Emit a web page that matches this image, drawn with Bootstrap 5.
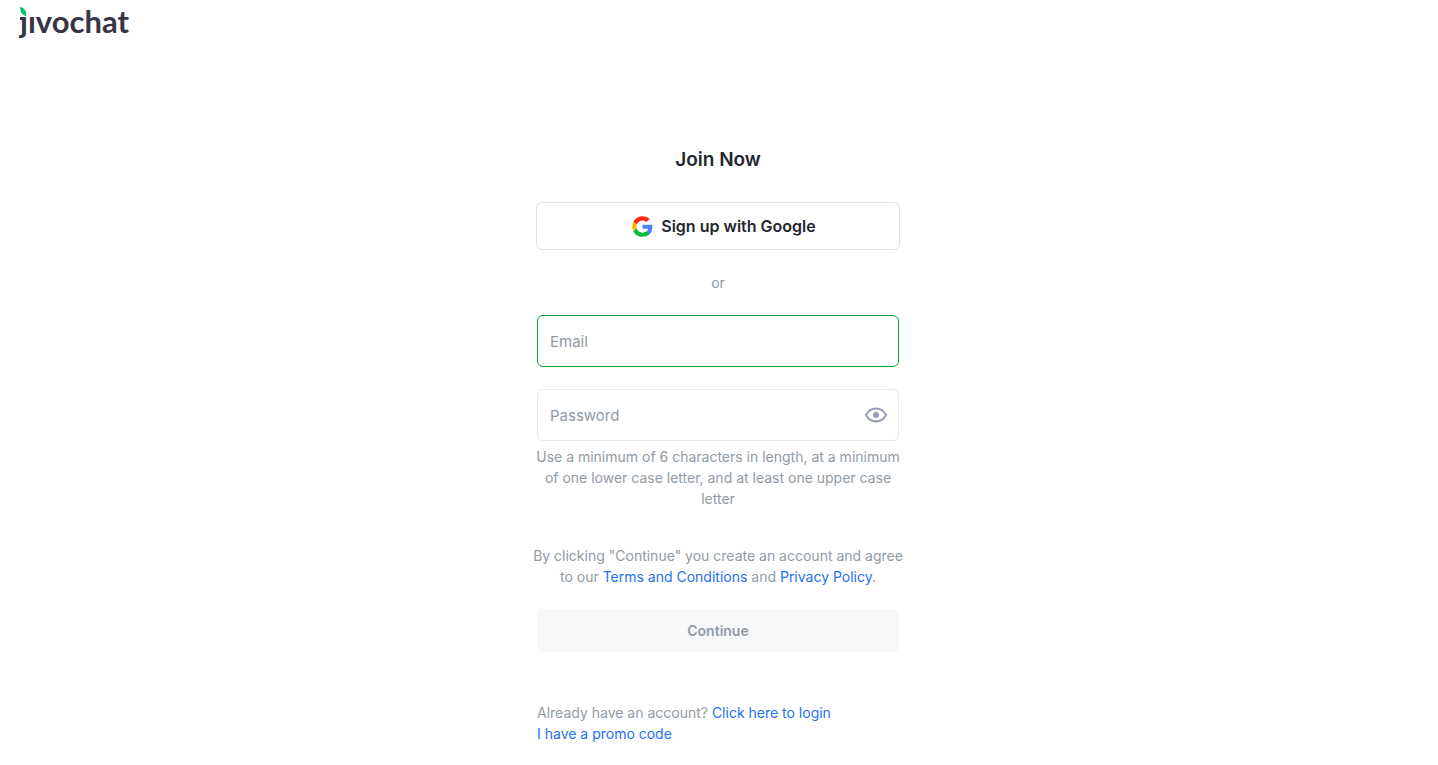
<!DOCTYPE html>
<html lang="en">
<head>
<meta charset="utf-8">
<meta name="viewport" content="width=device-width, initial-scale=1">
<title>JivoChat – Join Now</title>
<link href="https://cdn.jsdelivr.net/npm/bootstrap@5.3.0/dist/css/bootstrap.min.css" rel="stylesheet">
<style>
  body { font-family: Inter, "Liberation Sans", sans-serif; font-size: 14px; line-height: 21px; color: #919ba5; }
  a { color: #2371f5; text-decoration: none; }
  a:hover { text-decoration: underline; }
  .brand { height: 48px; }
  .signup { max-width: 364px; }
  .signup-wrap { padding: 97px 2px 20px 0; }
  .title { font-size: 19px; line-height: 30px; font-weight: 600; color: #23272f; margin-bottom: 27px; }
  .btn-google { height: 48px; font-size: 16px; font-weight: 600; color: #23272f; border: 1px solid #e1e1e8; border-radius: 6px; padding: 0 0 0 12px; }
  .btn-google:hover { background: #f7f8fa; border-color: #e1e1e8; }
  .divider { margin: 22px 0; }
  .signup-form, .signup-links { padding: 0 1px; }
  .field { height: 52px; font-size: 15px; padding: 0 12px; border: 1px solid #e9e9ee; border-radius: 6px; }
  .field::placeholder { color: #919ba5; }
  .field:focus, .field-active { border-color: #00a438; box-shadow: none; }
  .password-box { margin-top: 22px; }
  .field-password { padding-right: 46px; }
  .btn-eye { right: 12px; border: 0; line-height: 0; }
  .hint { margin: 5px -6px 36px; }
  .terms { margin: 0 -6px 22px; }
  .btn-continue, .btn-continue:disabled { height: 43px; font-size: 14px; font-weight: 600; color: #919ba5; background: #f7f8fa; border: 0; border-radius: 6px; opacity: 1; }
  .signup-links { margin-top: 50px; }
  .logo-text { font: 700 31px Lato, sans-serif; fill: #373447; }
</style>
</head>
<body class="bg-white">
<header class="brand">
  <a href="#" aria-label="JivoChat" class="d-inline-block">
    <svg class="d-block" width="140" height="48" viewBox="0 0 140 48">
      <text class="logo-text" x="20" y="33">ȷıvochat</text>
      <rect x="20" y="17" width="4" height="3" fill="#373447"/>
      <path d="M20 7C24 7.500 26.500 11 26.300 16C22.500 15.500 20 12 20 7Z" fill="#00c558"/>
    </svg>
  </a>
</header>
<main class="signup-wrap">
  <div class="signup mx-auto">
    <h1 class="title text-center">Join Now</h1>
    <button type="button" class="btn btn-google w-100 d-flex align-items-center justify-content-center">
      <svg class="me-2" width="21" height="21" viewBox="0 0 48 48" aria-hidden="true">
        <path fill="#ff2a13" d="M24 10c3.500 0 6.700 1.200 9.200 3.600l6.800-6.900C35.900 2.900 30.500.5 24 .5 14.800.5 6.900 5.800 3 13.500l7.900 6.200C12.700 14 17.900 10 24 10Z"/>
        <path fill="#4b83ff" d="M46.500 24.500c0-1.600-.2-3.100-.4-4.500H24v9.100h12.700c-.6 2.900-2.300 5.500-4.800 7.200l7.700 6c4.500-4.200 6.900-10.400 6.900-17.800Z"/>
        <path fill="#ffbd00" d="M10.900 28.500a14 14 0 0 1 0-8.900L3 13.500a23.500 23.500 0 0 0 0 21.200Z"/>
        <path fill="#00bd3b" d="M24 47.500c6.500 0 11.900-2.100 15.900-5.800l-7.700-6c-2.200 1.500-5 2.300-8.200 2.300-6.100 0-11.300-4-13.100-9.500L3 34.700C6.900 42.400 14.800 47.500 24 47.500Z"/>
      </svg>
      <span>Sign up with Google</span>
    </button>
    <p class="divider text-center">or</p>
    <form class="signup-form text-center">
      <input type="email" class="form-control field field-active" placeholder="Email" aria-label="Email">
      <div class="password-box position-relative">
        <input type="password" class="form-control field field-password" placeholder="Password" aria-label="Password">
        <button type="button" class="btn btn-eye p-0 position-absolute top-50 translate-middle-y" aria-label="Show password">
          <svg width="22" height="16" viewBox="0 0 22 16" fill="none">
            <path d="M1 8C3.200 3.800 6.600 1.500 11 1.500S18.800 3.800 21 8C18.800 12.200 15.400 14.500 11 14.500S3.200 12.200 1 8Z" stroke="#949cb8" stroke-width="2"/>
            <circle cx="11" cy="8" r="3" fill="#949cb8"/>
          </svg>
        </button>
      </div>
      <p class="hint">Use a minimum of 6 characters in length, at a minimum of one lower case letter, and at least one upper case letter</p>
      <p class="terms">By clicking "Continue" you create an account and agree to our <a href="#">Terms and Conditions</a> and <a href="#">Privacy Policy</a>.</p>
      <button type="submit" class="btn btn-continue w-100" disabled>Continue</button>
    </form>
    <div class="signup-links">
      <div>Already have an account? <a href="#">Click here to login</a></div>
      <a href="#">I have a promo code</a>
    </div>
  </div>
</main>
<script src="https://cdn.jsdelivr.net/npm/bootstrap@5.3.0/dist/js/bootstrap.bundle.min.js"></script>
</body>
</html>
